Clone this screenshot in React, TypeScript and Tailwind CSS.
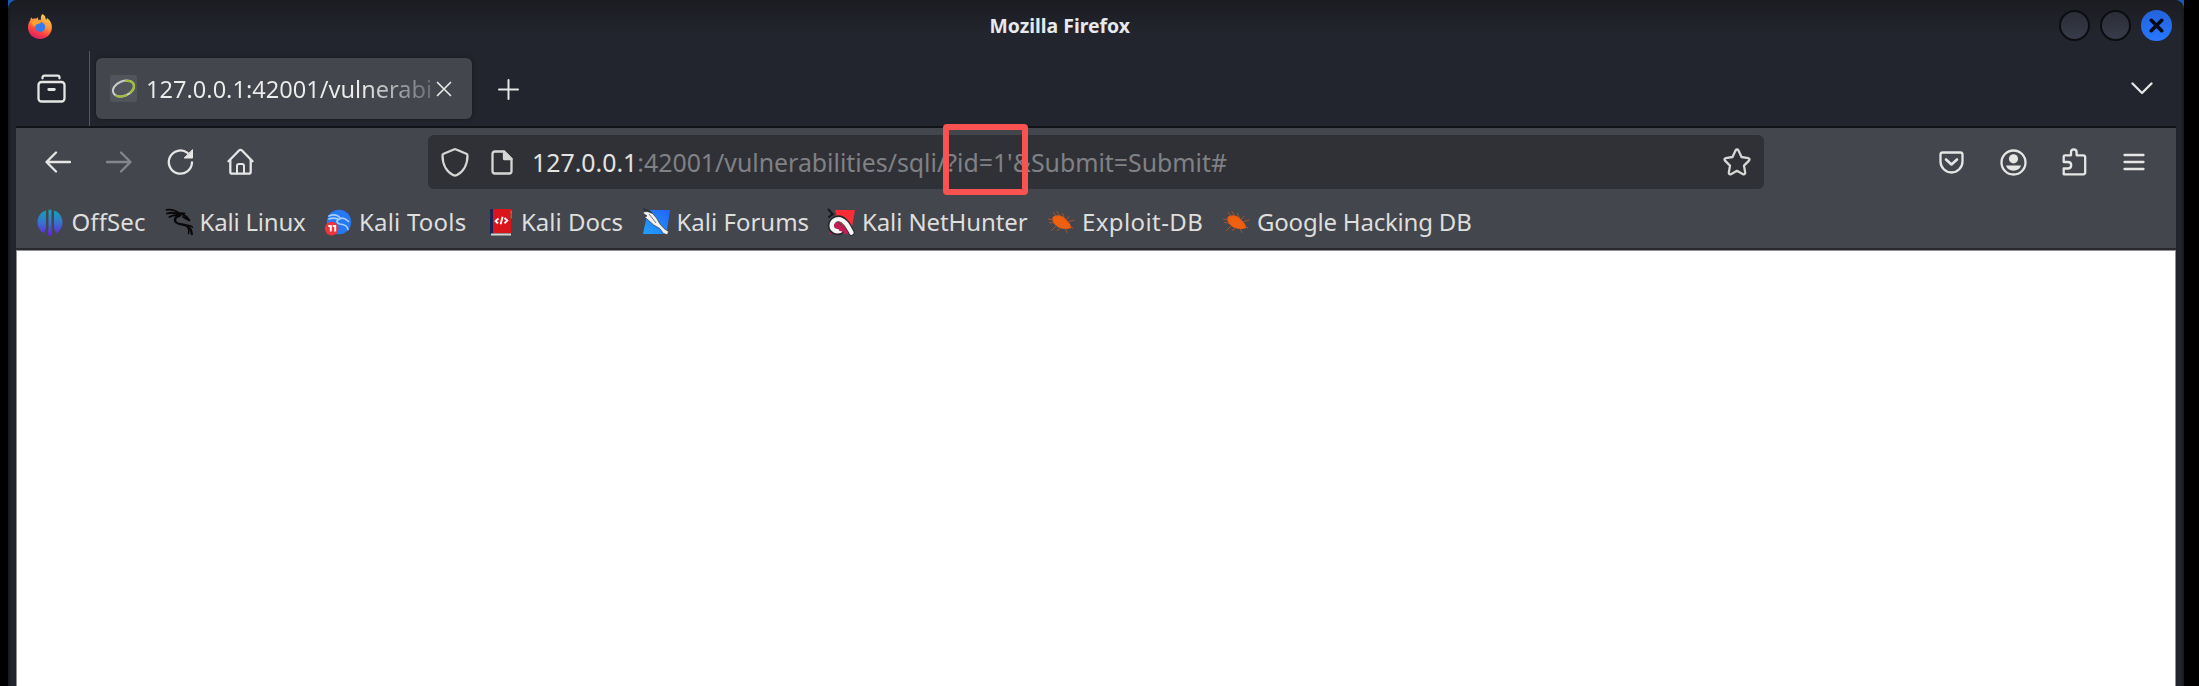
import React from "react";

const stroke = {
  fill: "none",
  stroke: "#e6e6e4",
  strokeWidth: 2.3,
  strokeLinecap: "round" as const,
  strokeLinejoin: "round" as const,
};

function FirefoxLogo() {
  return (
    <svg width="26" height="26" viewBox="0 0 26 26">
      <defs>
        <linearGradient id="fx" x1="0.8" y1="0" x2="0.35" y2="1">
          <stop offset="0" stopColor="#f6d34c" />
          <stop offset="0.45" stopColor="#ff9138" />
          <stop offset="0.75" stopColor="#fb3d43" />
          <stop offset="1" stopColor="#d81f66" />
        </linearGradient>
      </defs>
      <path
        fill="url(#fx)"
        d="M15.4 1c3 1.600 3.300 4.200 3.400 5.400 1-.1 1.400-.8 1.400-1.300 3.200 2.400 4.900 5.700 4.700 9.700C24.600 21 19.600 26 13 26 6.400 26 1 21.200 1 14.600 1 11 2.200 8.400 3.600 6.800c0-.9 0-1.600.6-2.400.6.4 1 1.100 1.300 1.700 1.200-.5 2.400-.6 3.500-.4.9-.7 1.500-1 2.300-1.100-.3 1-.3 1.600-.1 2.500 1-.4 2.200-.5 2.900-.4-.8-2.300.2-4.500 1.300-5.700z"
      />
      <circle cx="13.200" cy="14" r="5" fill="#3a78ee" />
      <path fill="#ffa22e" d="M4.500 9c2.400-1.300 6.600-1.500 9.600.6-1.300 1.500-3.200 1.300-4.600 1.800-1 .4-.9 1.500-1.800 1.600C6 13 4.600 11.500 4.500 9z" />
    </svg>
  );
}

function OffSecIcon() {
  return (
    <svg width="26" height="27" viewBox="0 0 26 27">
      <defs>
        <linearGradient id="os" x1="0" y1="0" x2="0" y2="27" gradientUnits="userSpaceOnUse">
          <stop offset="0.05" stopColor="#15a0b8" />
          <stop offset="0.5" stopColor="#3574cf" />
          <stop offset="1" stopColor="#6a1fe0" />
        </linearGradient>
      </defs>
      <path
        fill="url(#os)"
        d="M9 1.500v15.500c0 3-.9 5.200-2.600 7.200C2.500 21.800.5 18 .5 13.300.5 7.500 4 2.900 9 1.500zM17 1.500v15.500c0 3 .9 5.200 2.600 7.200 3.900-2.400 5.900-6.200 5.900-10.900 0-5.800-3.500-10.400-8.500-11.800zM11.500.8h3v17.500l.7 8.200h-4.400l.7-8.200z"
      />
    </svg>
  );
}

function DragonIcon() {
  return (
    <svg width="29" height="28" viewBox="0 0 29 28" fill="none" stroke="#08080a" strokeLinecap="round">
      <path d="M1.500 1.800c5-.6 9.500.5 13.500 4.200M2 5.500c4.500-1.300 8.500-.8 12 1M4.500 9c2.500-1.600 6-2.200 9.500-1.500" strokeWidth="1.800" />
      <path d="M14 6.500c3.500-.8 7 .6 10.500 5.700M15 5.200l4.500.2M18 9l6.300 3.400" strokeWidth="1.800" />
      <path d="M15 7.500c-5 1-6.300 4.500-3.800 7 2.700 2.500 7.500 1.400 11.300 3.800 2.700 1.700 4 4.500 4.300 7.700" strokeWidth="2.300" />
      <path d="M22 18c1.800 2.500 2.300 5 1.500 7.500M21 17.500c3-.6 5 .3 6.500 1.700" strokeWidth="1.400" />
    </svg>
  );
}

function ToolsIcon() {
  return (
    <svg width="28" height="28" viewBox="0 0 28 28">
      <circle cx="15" cy="14" r="12.200" fill="#2678f5" />
      <path d="M5 8c5-2 9-.7 11.500 2.500M5 11c3-1.400 6-1.200 9 0M16.500 10.500c3-1 5.500.5 8 3M16 11c-4 .8-4 4 0 5 4 .5 7.500 1.500 8 5.500" fill="none" stroke="#a9cdfc" strokeWidth="1.700" strokeLinecap="round" />
      <circle cx="7.600" cy="20.600" r="6.800" fill="#ef3338" />
      <path d="M4.300 18h2.500v5.500M8.700 18h2.500v5.500" fill="none" stroke="#fff" strokeWidth="1.900" />
    </svg>
  );
}

function DocsIcon() {
  return (
    <svg width="28" height="28" viewBox="0 0 28 28">
      <path fill="#1b2457" d="M4 1h3v25H4z" />
      <path fill="#d9151b" d="M7 1h18v24H7z" />
      <path fill="#c9632a" d="M24.500 2.500h1.500v4h-1.500z" />
      <path fill="#4d8a56" d="M24.500 7h1.500v3.500h-1.500z" />
      <path fill="#d7d3d3" d="M5 25.500h20v2H5z" />
      <path d="M12.500 10.500l-3 2.500 2.500 2.500M18.500 10l2.800 2.500-2.800 2.800M16.600 8.800l-2 7.400" fill="none" stroke="#fff" strokeWidth="1.800" />
    </svg>
  );
}

function ForumsIcon() {
  return (
    <svg width="28" height="28" viewBox="0 0 28 28">
      <defs>
        <linearGradient id="fo" x1="1" y1="0" x2="0" y2="1">
          <stop offset="0" stopColor="#2463f4" />
          <stop offset="1" stopColor="#21a2fd" />
        </linearGradient>
      </defs>
      <path fill="url(#fo)" d="M6 2h22l-3.500 24H1z" />
      <path fill="#2c2f36" d="M1 0l7 2.500 3 3-8 5-.5-6z" />
      <path fill="#f1f1f1" stroke="#33363d" strokeWidth=".7" d="M2 3.500l4 .2 4.500 1.800 4 4.500 3.500 6 4 4.500 4.500 3-1 3.300-4-1.300-3.800-5-6-3.500-5-4.500-4.200-3.500L5 8 1.500 5.500z" />
      <path stroke="#777" strokeWidth="1" d="M7 6l7 9" />
    </svg>
  );
}

function NetHunterIcon() {
  return (
    <svg width="28" height="28" viewBox="0 0 28 28">
      <path fill="#fa2c36" d="M8 2h20l-4 23L11 13z" />
      <path fill="#c51c55" d="M2 16l7-3 14 11 1 2H3z" />
      <path stroke="#17181c" strokeWidth="2" strokeLinecap="round" d="M1.500 1.500l4.500 5M2 9l3-2.500" />
      <path d="M13.500 23.500c-4.500 1.800-9-.5-9.500-5-.4-5 4-9 9-8 5 1.200 8 6.500 11.500 14" fill="none" stroke="#25272d" strokeWidth="6.200" strokeLinecap="round" />
      <path d="M13.200 22.800c-4 1.200-8-.5-8.500-4.500-.3-4.500 3.800-8 8.500-7 5 1.200 7.500 6.500 11.300 13.300" fill="none" stroke="#f6f6f6" strokeWidth="4.400" strokeLinecap="round" />
      <path d="M10.500 19.500c.5-2.500 3-2.500 4.500-.5l3.500 5-6-1z" fill="#c51c55" />
    </svg>
  );
}

function BugIcon() {
  return (
    <svg width="28" height="28" viewBox="0 0 28 28">
      <path fill="#ee5f10" d="M5.500 9.500C8 6.500 13 6.500 17 9.500c2.500 2 4.500 5 6 6.500l1.500 4c-3 .5-5 1.500-8.500.8C10.500 20 4 14.500 5.500 9.500z" />
      <path
        d="M9 8L6.500 4.500M13 8L10 3.500M17 9.500l-1.500-4M19 12l3-3.500M21 14l6-2M6 12l-4.500-1M6.500 15l-4-.5M9 18l-4.500 4.500M13 20.500l-3 2M18 20.500l2 4M23 18l3 2"
        stroke="#a9532a"
        strokeWidth="1"
        strokeLinecap="round"
      />
    </svg>
  );
}

const bookmarks = [
  { label: "OffSec", Icon: OffSecIcon, tracking: "tracking-[0.1px]" },
  { label: "Kali Linux", Icon: DragonIcon, tracking: "tracking-[-0.2px]" },
  { label: "Kali Tools", Icon: ToolsIcon, tracking: "tracking-[0.2px]" },
  { label: "Kali Docs", Icon: DocsIcon, tracking: "tracking-normal" },
  { label: "Kali Forums", Icon: ForumsIcon, tracking: "tracking-normal" },
  { label: "Kali NetHunter", Icon: NetHunterIcon, tracking: "tracking-[-0.1px]" },
  { label: "Exploit-DB", Icon: BugIcon, tracking: "tracking-[0.4px]" },
  { label: "Google Hacking DB", Icon: BugIcon, tracking: "tracking-[-0.2px]" },
];

function TitleBar() {
  return (
    <header className="grid h-[51px] grid-cols-[962.500px_auto_1fr] items-center pr-2.5 pl-[17px]">
      <FirefoxLogo />
      <h1 className="text-[19.4px] leading-none font-bold text-[#e6e9ee]">Mozilla Firefox</h1>
      <div className="flex justify-end gap-2.5">
        <span className="size-[31px] rounded-full border-2 border-[#0c0d11] bg-linear-to-b from-[#2b2e38] to-[#383b49]" />
        <span className="size-[31px] rounded-full border-2 border-[#0c0d11] bg-linear-to-b from-[#2b2e38] to-[#383b49]" />
        <span className="flex size-[31px] items-center justify-center rounded-full bg-linear-to-b from-[#2362d9] to-[#2777ff]">
          <svg width="15" height="15" viewBox="0 0 15 15" stroke="#050a14" strokeWidth="3.600" strokeLinecap="round">
            <path d="M2.300 2.300l10.400 10.400M12.700 2.300L2.300 12.700" />
          </svg>
        </span>
      </div>
    </header>
  );
}

function TabStrip() {
  return (
    <div className="flex h-[75px] items-start px-2">
      <div className="flex h-[75px] w-[70px] items-center border-r-[1.500px] border-[#55575d] pl-[16.500px]">
        <svg width="29" height="29" viewBox="0 0 29 29" {...stroke}>
          <path d="M5.500 4.300v-.8c0-1 .8-1.800 1.800-1.800h13.400c1 0 1.800.8 1.800 1.800v.8" />
          <rect x="1.500" y="8" width="26" height="19.500" rx="3" />
          <path d="M11.800 15.500h5.500" strokeWidth="2.800" />
        </svg>
      </div>
      <div className="mt-[7px] ml-1.5 flex h-[61px] w-[376px] items-center rounded-[6px] bg-[#44464d] pr-[20px] pl-[14px] shadow-[0_0_5px_rgba(0,0,0,0.35)]">
        <svg width="27" height="27" viewBox="0 0 27 27" className="shrink-0">
          <rect width="27" height="27" rx="2" fill="#51545a" />
          <g fill="none" strokeLinecap="round" transform="rotate(-22 13.500 13.500)">
            <ellipse cx="13.500" cy="13.500" rx="11" ry="7.300" stroke="#c9ccc9" strokeWidth="2" />
            <path d="M19 7.500c4 1.500 6 3.500 5.500 6.500-.5 2.500-3 4.700-6 5.700" stroke="#9fbf3c" strokeWidth="2.400" />
            <path d="M4 17.500c2 2.200 5.500 3.300 9.500 3.300" stroke="#9fbf3c" strokeWidth="2" />
          </g>
        </svg>
        <span className="ml-[9px] w-[288px] shrink-0 bg-linear-to-r from-[#ececea] from-75% to-[#65676d] bg-clip-text text-[23.600px] leading-[36px] whitespace-nowrap text-transparent">
          127.0.0.1:42001/vulnerabi
        </span>
        <svg width="16" height="16" viewBox="0 0 16 16" {...stroke} strokeWidth="1.700" className="ml-auto shrink-0">
          <path d="M1.500 1.500l13 13M14.500 1.500l-13 13" />
        </svg>
      </div>
      <svg width="21" height="21" viewBox="0 0 21 21" {...stroke} strokeWidth="2" className="mt-[28px] ml-[26px]">
        <path d="M10.500 1v19M1 10.500h19" />
      </svg>
      <svg width="22" height="13" viewBox="0 0 22 13" {...stroke} className="mt-[31px] mr-[19px] ml-auto">
        <path d="M1.500 1.500l9.500 9.500 9.500-9.500" />
      </svg>
    </div>
  );
}

function NavBar() {
  return (
    <div className="flex h-[68px] items-center pl-[29px]">
      <svg width="26" height="22" viewBox="0 0 26 22" {...stroke}>
        <path d="M25 11H1.500M11 1.500L1.500 11l9.500 9.500" />
      </svg>
      <svg width="26" height="22" viewBox="0 0 26 22" {...stroke} stroke="#85868b" className="ml-[35px]">
        <path d="M1 11h23.500M15 1.500l9.500 9.500-9.500 9.500" />
      </svg>
      <svg width="27" height="26" viewBox="0 0 27 26" {...stroke} className="ml-[34.500px]">
        <path d="M25 13.500A11.600 11.600 0 1 1 20.500 3.900" />
        <path d="M25.500 1v8h-8z" fill="#e6e6e4" strokeWidth="1" />
      </svg>
      <svg width="27" height="28" viewBox="0 0 27 28" {...stroke} className="ml-[33px]">
        <path d="M1.500 13.200L12 2.500c.9-.9 2.100-.9 3 0l10.500 10.700" />
        <path d="M3.300 12v11.700c0 1.300.8 2 2 2h16.400c1.200 0 2-.7 2-2V12" />
        <path d="M10 25.500V18c0-1.200.7-2 2-2h3c1.300 0 2 .8 2 2v7.500" strokeWidth="2" />
      </svg>

      <div className="relative ml-[174px] flex h-[54px] w-[1336px] items-center rounded-[6px] bg-[#303136] pr-[13px] pl-[13.500px]">
        <svg width="28" height="29" viewBox="0 0 28 29" {...stroke} stroke="#d6d6d4">
          <path d="M12.800 1.500q1.200-.6 2.400 0l10.100 4.300q1.200.5 1.200 1.800C26.500 16.500 22.500 24 15.600 27.200q-1.600.6-3.200 0C5.500 24 1.500 16.500 1.500 7.600q0-1.300 1.200-1.800z" />
        </svg>
        <svg width="22" height="25" viewBox="0 0 22 25" {...stroke} stroke="#d6d6d4" className="ml-[22px]">
          <path d="M4 1.500h9l7.500 7.500v12.200c0 1.300-.9 2.300-2.300 2.300H3.800c-1.400 0-2.300-1-2.300-2.300V4c0-1.500 1-2.500 2.500-2.500z" />
          <path d="M13 1.500v7.500h7.500z" fill="#d6d6d4" />
        </svg>
        <p className="ml-[19px] text-[24.860px] leading-[36px] whitespace-nowrap text-[#808185]">
          <span className="text-[#e3e3e1]">127.0.0.1</span>:42001/vulnerabilities/sqli/?id=1'&amp;Submit=Submit#
        </p>
        <svg width="28" height="28" viewBox="0 0 28 28" {...stroke} stroke="#d6d6d4" className="ml-auto">
          <path d="M12.500 2.500q1.500-2 3 0l3 6.500 6.700 1.100q2.200.6.800 2.500l-5 5 1.200 7q0 2.300-2.200 1.600L14 22.800l-6 3.400q-2.200.7-2.200-1.600l1.200-7-5-5q-1.400-1.900.8-2.500L9.500 9z" />
        </svg>
        <div className="absolute -top-[11px] left-[515px] h-[71px] w-[85px] rounded-[4px] border-6 border-[#fa5250]" />
      </div>

      <svg width="25" height="23" viewBox="0 0 25 23" {...stroke} className="ml-[175px]">
        <path d="M3.700 1.500h17.600c1.300 0 2.200.9 2.200 2.200V10.500c0 6-5 11-11 11s-11-5-11-11V3.700c0-1.300.9-2.200 2.200-2.200z" />
        <path d="M7 8.500l5.500 5 5.500-5" strokeWidth="2.600" />
      </svg>
      <svg width="27" height="27" viewBox="0 0 27 27" {...stroke} className="ml-[36px]">
        <circle cx="13.500" cy="13.500" r="12" />
        <circle cx="13.500" cy="9.800" r="4.600" fill="#e6e6e4" stroke="none" />
        <path d="M6 16.500h15c-.7 3-3.800 5.200-7.500 5.200S6.700 19.500 6 16.500z" fill="#e6e6e4" stroke="none" />
      </svg>
      <svg width="25" height="28" viewBox="0 0 25 28" {...stroke} className="mb-px ml-[35.500px]">
        <path d="M1.700 26.300V20.500h4.100c2.200 0 3.400-1.500 3.400-3.300s-1.200-3.200-3.400-3.200H1.700V8.500c0-.8.600-1.200 1.300-1.200h6V4.200C9 2.400 10.300 1.300 11.800 1.300s2.800 1.100 2.800 2.900v3.100h6.600c1.300 0 2 .8 2 2v15c0 1.200-.7 2-2 2z" />
      </svg>
      <svg width="22" height="19" viewBox="0 0 22 19" {...stroke} className="ml-[36px]">
        <path d="M1.500 2h19M1.500 9h19M1.500 16h19" />
      </svg>
    </div>
  );
}

function BookmarksBar() {
  return (
    <nav className="grid h-[52px] grid-cols-[128px_159.500px_162px_155.500px_185.500px_220px_175px_1fr] items-center pl-[20.500px]">
      {bookmarks.map(({ label, Icon, tracking }) => (
        <a key={label} className="flex items-center whitespace-nowrap">
          <span className="flex w-[35px] shrink-0">
            <Icon />
          </span>
          <span className={`text-[24px] leading-[34px] text-[#dededc] ${tracking}`}>{label}</span>
        </a>
      ))}
    </nav>
  );
}

export default function App() {
  return (
    <div className="h-[686px] w-[2199px] overflow-hidden bg-black pr-[15px] pl-2 font-['Noto_Sans',sans-serif]">
      <div className="h-full bg-linear-to-b from-[#1c56b4] from-0% via-[#1c56b4] via-2% to-black to-2%">
        <div className="flex h-full flex-col rounded-t-[9px] border-x-2 border-[#191b23] bg-[#23252e] bg-linear-to-b from-[#1b1c21] to-[#23252e] to-[34px]">
          <TitleBar />
          <div className="flex flex-1 flex-col px-1.5">
            <div className="-mx-1">
              <TabStrip />
            </div>
            <div className="h-[2px] bg-[#121319]" />
            <div className="bg-[#44464d]">
              <NavBar />
              <BookmarksBar />
            </div>
            <div className="h-[2px] bg-[#292a30]" />
            <main className="flex-1 border-x border-t border-[#8f9094] bg-white" />
          </div>
        </div>
      </div>
    </div>
  );
}
